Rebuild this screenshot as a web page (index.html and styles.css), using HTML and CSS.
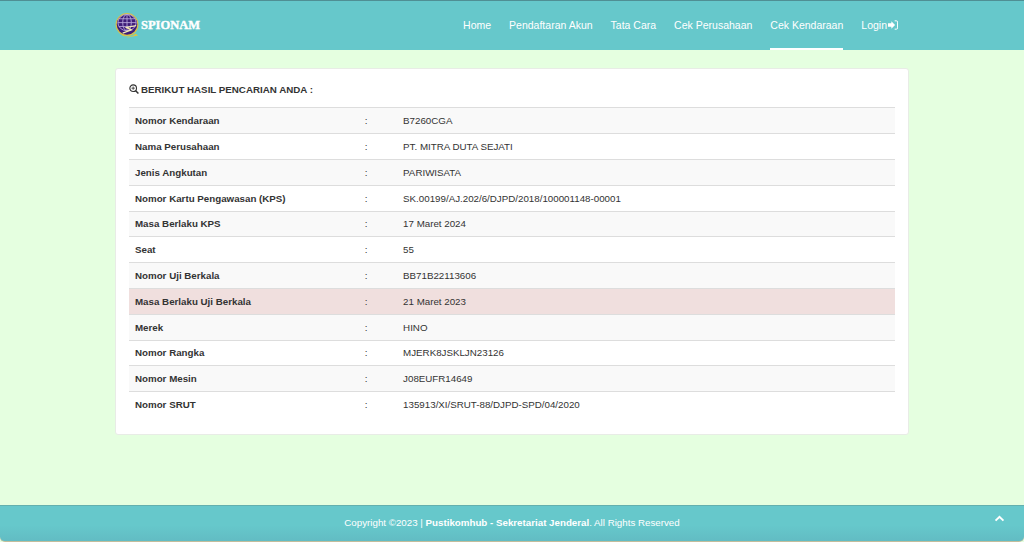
FILE: index.html
```html
<!DOCTYPE html>
<html lang="id">
<head>
<meta charset="utf-8">
<title>SPIONAM</title>
<link rel="stylesheet" href="styles.css">
</head>
<body>
<div class="page">
  <header class="navbar">
    <a class="brand" href="#">
      <svg class="brand-logo" viewBox="0 0 26 26" width="25" height="25" aria-hidden="true">
        <path d="M5 21a11.500 11.500 0 0 0 16.500 .5L24 23.500 13 25.500z" fill="#e3c53e"/>
        <circle cx="12.500" cy="12" r="11.300" fill="#3d1c78" stroke="#d9c24a" stroke-width="1.200"/>
        <g fill="none" stroke="#b9a9dc" stroke-width=".9">
          <ellipse cx="12.500" cy="10" rx="9.500" ry="8.500"/>
          <ellipse cx="12.500" cy="10" rx="4.500" ry="8.500"/>
          <path d="M12.500 1.500v17M4 6h17M3 10h19M4 14h17"/>
        </g>
        <path d="M8 21l9-3.500-5-2.500 10-2" fill="none" stroke="#f4eab0" stroke-width="1.300"/>
      </svg>
      <span class="brand-name">SPIONAM</span>
    </a>
    <nav class="nav">
      <a href="#">Home</a>
      <a href="#">Pendaftaran Akun</a>
      <a href="#">Tata Cara</a>
      <a href="#">Cek Perusahaan</a>
      <a href="#" class="active">Cek Kendaraan</a>
      <a href="#" class="login">Login
        <svg viewBox="0 0 12 12" width="10" height="10" aria-hidden="true">
          <path d="M0 4h4V1.500L8.500 6 4 10.500V8H0z" fill="#fff"/>
          <path d="M8 1h2a1.500 1.500 0 0 1 1.500 1.500v7A1.500 1.500 0 0 1 10 11H8" fill="none" stroke="#fff" stroke-width="1.200"/>
        </svg>
      </a>
    </nav>
  </header>

  <main class="main">
    <section class="card">
      <h1 class="card-title">
        <svg viewBox="0 0 12 12" width="10" height="10" aria-hidden="true">
          <circle cx="5" cy="5" r="4" fill="none" stroke="#333" stroke-width="1.300"/>
          <path d="M8 8l3.300 3.300" stroke="#333" stroke-width="1.800"/>
          <path d="M3 5h4M5 3v4" stroke="#333" stroke-width="1"/>
        </svg>
        BERIKUT HASIL PENCARIAN ANDA :
      </h1>
      <table class="result">
        <tbody>
          <tr><th>Nomor Kendaraan</th><td class="sep">:</td><td>B7260CGA</td></tr>
          <tr><th>Nama Perusahaan</th><td class="sep">:</td><td>PT. MITRA DUTA SEJATI</td></tr>
          <tr><th>Jenis Angkutan</th><td class="sep">:</td><td>PARIWISATA</td></tr>
          <tr><th>Nomor Kartu Pengawasan (KPS)</th><td class="sep">:</td><td>SK.00199/AJ.202/6/DJPD/2018/100001148-00001</td></tr>
          <tr><th>Masa Berlaku KPS</th><td class="sep">:</td><td>17 Maret 2024</td></tr>
          <tr><th>Seat</th><td class="sep">:</td><td>55</td></tr>
          <tr><th>Nomor Uji Berkala</th><td class="sep">:</td><td>BB71B22113606</td></tr>
          <tr class="danger"><th>Masa Berlaku Uji Berkala</th><td class="sep">:</td><td>21 Maret 2023</td></tr>
          <tr><th>Merek</th><td class="sep">:</td><td>HINO</td></tr>
          <tr><th>Nomor Rangka</th><td class="sep">:</td><td>MJERK8JSKLJN23126</td></tr>
          <tr><th>Nomor Mesin</th><td class="sep">:</td><td>J08EUFR14649</td></tr>
          <tr><th>Nomor SRUT</th><td class="sep">:</td><td>135913/XI/SRUT-88/DJPD-SPD/04/2020</td></tr>
        </tbody>
      </table>
    </section>
  </main>

  <footer class="footer">
    <p>Copyright ©2023 | <strong>Pustikomhub - Sekretariat Jenderal</strong>. All Rights Reserved</p>
    <a class="to-top" href="#" aria-label="Ke atas">
      <svg viewBox="0 0 12 8" width="11" height="7" aria-hidden="true">
        <path d="M1.500 6.500L6 2l4.500 4.500" fill="none" stroke="#fff" stroke-width="2.200"/>
      </svg>
    </a>
  </footer>
</div>
</body>
</html>
```
FILE: styles.css
```css
* { box-sizing: border-box; }

html, body {
  margin: 0;
  height: 100%;
  overflow: hidden;
}

body {
  background: #e5ffe0;
  color: #333;
  font-family: "Liberation Sans", Arial, sans-serif;
  font-size: 9.75px;
}

a { color: inherit; text-decoration: none; }

.page {
  display: flex;
  flex-direction: column;
  height: 542px;
}

.navbar {
  display: flex;
  justify-content: space-between;
  height: 50px;
  padding: 0 126px 0 115px;
  background: #66c8cb;
  border-top: 1px solid #4f8f94;
}

.brand {
  display: flex;
  align-items: center;
  gap: 1px;
  padding-bottom: 1px;
}

.brand-name {
  color: #fff;
  font-family: "Liberation Serif", serif;
  font-size: 12.500px;
  font-weight: 700;
  -webkit-text-stroke: .4px #fff;
}

.nav {
  display: flex;
  gap: 18px;
}

.nav a {
  display: flex;
  align-items: center;
  gap: 1px;
  padding-bottom: 0;
  color: #fff;
  font-size: 10.5px;
  border-bottom: 2px solid transparent;
}

.nav a.active { border-bottom-color: #fff; }

.main {
  flex: 1;
  padding: 18px 115px 0;
}

.card {
  height: 367px;
  padding: 8px 13px 0;
  background: #fff;
  border: 1px solid #e8ece6;
  border-radius: 3px;
}

.card-title {
  display: flex;
  align-items: center;
  gap: 2px;
  height: 24px;
  margin: 0;
  font-size: 9.75px;
  font-weight: 700;
}

.result {
  width: 100%;
  margin-top: 6.4px;
  table-layout: fixed;
  border-collapse: collapse;
}

.result th,
.result td {
  height: 25.8px;
  padding: 0 6px;
  border-top: 1px solid #ddd;
  font-size: 9.75px;
  text-align: left;
  vertical-align: middle;
}

.result th { width: 30%; font-weight: 700; }
.result td.sep { width: 5%; }

.result tr:nth-child(odd) { background: #f9f9f9; }
.result tr.danger { background: #f0dfde; }

.footer {
  position: relative;
  display: flex;
  align-items: center;
  justify-content: center;
  height: 37px;
  padding-bottom: 2px;
  background: linear-gradient(#66c8cb 55%, #62bcc3);
  border-top: 1px solid #63b0ae;
  border-bottom: 1px solid #c3bd9c;
  border-radius: 0 0 5px 5px;
  color: #fff;
}

.footer p { margin: 0; font-size: 9.75px; }

.to-top {
  position: absolute;
  top: 9px;
  right: 19px;
  display: flex;
}
```
